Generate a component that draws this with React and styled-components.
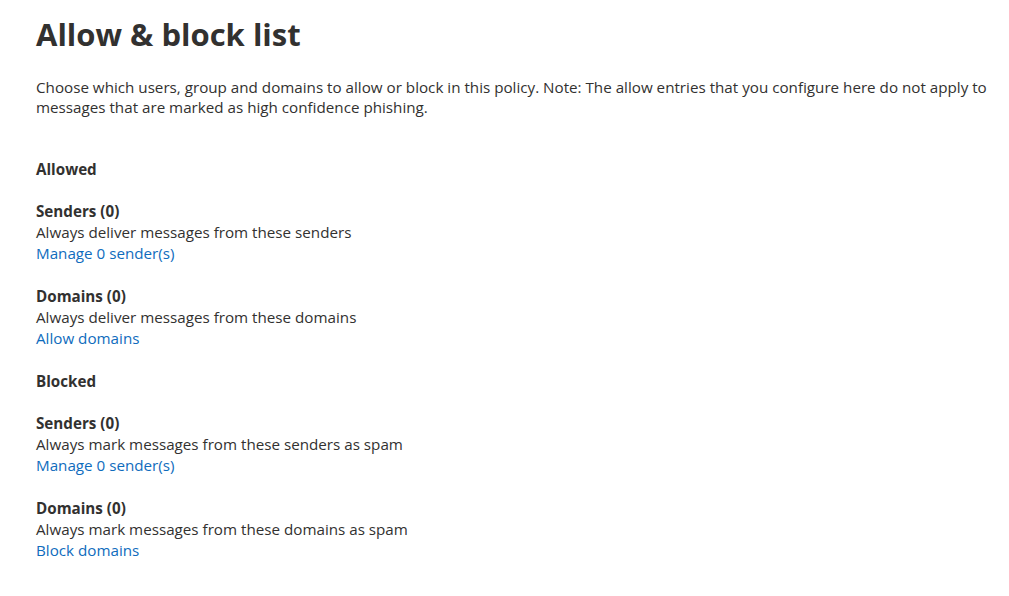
import React from 'react';
import styled, { createGlobalStyle } from 'styled-components';

const GlobalStyle = createGlobalStyle`
  body {
    margin: 0;
    background: #ffffff;
    font-family: "Open Sans", "Noto Sans", sans-serif;
    color: #323130;
  }
`;

const Page = styled.div`
  padding: 14px 0 0 36px;
  width: 1009px;
  box-sizing: border-box;
`;

const Title = styled.h1`
  font-size: 31px;
  font-weight: 700;
  line-height: 40px;
  margin: 0 0 23px 0;
  color: #323130;
`;

const Intro = styled.p`
  font-size: 15.2px;
  line-height: 20px;
  margin: 0 0 42px 0;
  max-width: 962px;
`;

const Section = styled.div`
  display: flex;
  flex-direction: column;
  gap: 22px;
  margin-bottom: 22px;
`;

const SectionLabel = styled.div`
  font-size: 15.2px;
  font-weight: 700;
  line-height: 21px;
  margin-bottom: -1px;
`;

const Group = styled.div`
  display: flex;
  flex-direction: column;
  font-size: 15.2px;
  line-height: 21px;
`;

const GroupTitle = styled.div`
  font-weight: 700;
`;

const Link = styled.a`
  color: #0f6cbd;
  text-decoration: none;
  cursor: pointer;
`;

const sections = [
  {
    label: 'Allowed',
    groups: [
      { title: 'Senders (0)', text: 'Always deliver messages from these senders', link: 'Manage 0 sender(s)' },
      { title: 'Domains (0)', text: 'Always deliver messages from these domains', link: 'Allow domains' },
    ],
  },
  {
    label: 'Blocked',
    groups: [
      { title: 'Senders (0)', text: 'Always mark messages from these senders as spam', link: 'Manage 0 sender(s)' },
      { title: 'Domains (0)', text: 'Always mark messages from these domains as spam', link: 'Block domains' },
    ],
  },
];

export default function App() {
  return (
    <>
      <GlobalStyle />
      <Page>
        <Title>Allow &amp; block list</Title>
        <Intro>
          Choose which users, group and domains to allow or block in this policy. Note: The allow entries that you
          configure here do not apply to messages that are marked as high confidence phishing.
        </Intro>
        {sections.map((s) => (
          <Section key={s.label}>
            <SectionLabel>{s.label}</SectionLabel>
            {s.groups.map((g) => (
              <Group key={g.title}>
                <GroupTitle>{g.title}</GroupTitle>
                <span>{g.text}</span>
                <Link>{g.link}</Link>
              </Group>
            ))}
          </Section>
        ))}
      </Page>
    </>
  );
}
